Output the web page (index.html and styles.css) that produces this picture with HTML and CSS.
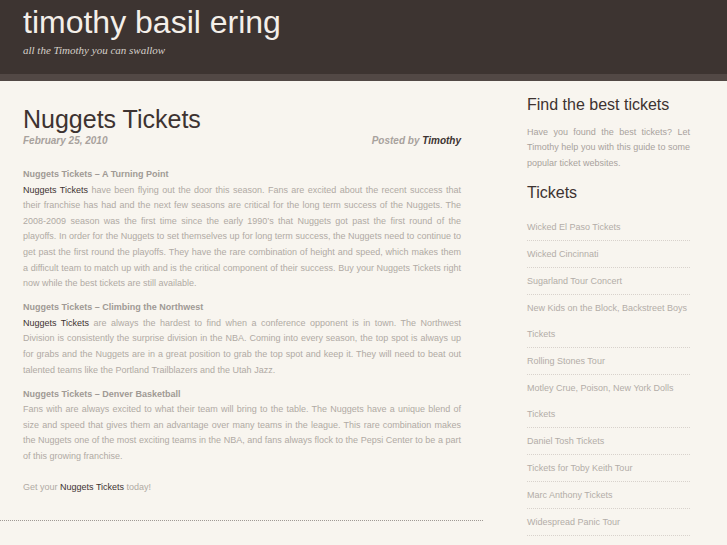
FILE: index.html
```html
<!DOCTYPE html>
<html>
<head>
<meta charset="utf-8">
<title>timothy basil ering</title>
<link rel="stylesheet" href="styles.css">
</head>
<body>
<header class="masthead">
  <h1 class="site-title">timothy basil ering</h1>
  <div class="tagline">all the Timothy you can swallow</div>
</header>
<div class="page">
  <main class="content">
    <h2 class="post-title">Nuggets Tickets</h2>
    <div class="post-meta">
      <span class="date">February 25, 2010</span>
      <span class="author">Posted by <b>Timothy</b></span>
    </div>
    <div class="entry">
      <p><strong>Nuggets Tickets – A Turning Point</strong><br><a href="#">Nuggets Tickets</a> have been flying out the door this season. Fans are excited about the recent success that their franchise has had and the next few seasons are critical for the long term success of the Nuggets. The 2008-2009 season was the first time since the early 1990’s that Nuggets got past the first round of the playoffs. In order for the Nuggets to set themselves up for long term success, the Nuggets need to continue to get past the first round the playoffs. They have the rare combination of height and speed, which makes them a&nbsp;difficult team to match up with and is the critical component of their success. Buy your Nuggets Tickets right now while the best tickets are still available.</p>
      <p><strong>Nuggets Tickets – Climbing the Northwest</strong><br><a href="#">Nuggets Tickets</a> are always the hardest to find when a conference opponent is in town. The Northwest Division is consistently the surprise division in the NBA. Coming into every season, the top spot is always up for grabs and the Nuggets are in a great position to grab the top spot and keep it. They will need to beat out talented teams like the Portland Trailblazers and the Utah Jazz.</p>
      <p><strong>Nuggets Tickets – Denver Basketball</strong><br>Fans with are always excited to what their team will bring to the table. The Nuggets have a unique blend of size and speed that gives them an advantage over many teams in the league. This rare combination makes the Nuggets one of the most exciting teams in the NBA, and fans always flock to the Pepsi Center to be a part of this growing franchise.</p>
      <p class="closing">Get your <a href="#">Nuggets Tickets</a> today!</p>
    </div>
  </main>
  <aside class="sidebar">
    <h3 class="widget-title">Find the best tickets</h3>
    <p class="widget-text">Have you found the best tickets? Let Timothy help you with this guide to some popular ticket websites.</p>
    <h3 class="widget-title tickets-title">Tickets</h3>
    <ul class="links">
      <li><a href="#">Wicked El Paso Tickets</a></li>
      <li><a href="#">Wicked Cincinnati</a></li>
      <li><a href="#">Sugarland Tour Concert</a></li>
      <li><a href="#">New Kids on the Block, Backstreet Boys Tickets</a></li>
      <li><a href="#">Rolling Stones Tour</a></li>
      <li><a href="#">Motley Crue, Poison, New York Dolls Tickets</a></li>
      <li><a href="#">Daniel Tosh Tickets</a></li>
      <li><a href="#">Tickets for Toby Keith Tour</a></li>
      <li><a href="#">Marc Anthony Tickets</a></li>
      <li><a href="#">Widespread Panic Tour</a></li>
      <li><a href="#">Def Leppard, Heart Tickets</a></li>
    </ul>
  </aside>
</div>
</body>
</html>
```
FILE: styles.css
```css
html, body {
  margin: 0;
  padding: 0;
}
body {
  background: #f8f5ef;
  font-family: "Liberation Sans", Arial, sans-serif;
  color: #b0aaa4;
  overflow: hidden;
}
a {
  color: #3d3331;
  text-decoration: none;
}
.masthead {
  background: #3d3431;
  height: 70px;
  padding: 4px 0 0 23px;
  border-bottom: 7px solid #524845;
}
.site-title {
  margin: 0;
  font-size: 32px;
  line-height: 36px;
  font-weight: normal;
  color: #f4efe9;
}
.tagline {
  margin-top: 3px;
  font-family: "Liberation Serif", "Times New Roman", serif;
  font-style: italic;
  font-size: 11px;
  line-height: 14px;
  color: #d6d0ca;
}
.page {
  display: flex;
  align-items: flex-start;
}
.content {
  width: 483px;
  flex: none;
  box-sizing: border-box;
  padding: 23px 22px 25px 23px;
  border-bottom: 1px dotted #9f9994;
}
.post-title {
  margin: 0;
  font-size: 25px;
  line-height: 30px;
  font-weight: normal;
  color: #3d3331;
}
.post-meta {
  display: flex;
  justify-content: space-between;
  font-size: 10px;
  line-height: 14px;
  font-weight: bold;
  font-style: italic;
  color: #a8a29d;
}
.post-meta b {
  color: #3d3331;
}
.entry {
  margin-top: 19px;
  font-size: 9px;
  line-height: 15.6px;
  text-align: justify;
}
.entry p {
  margin: 0 0 8.4px;
}
.entry strong {
  color: #a09a95;
}
.entry p.closing {
  margin: 15.4px 0 0;
}
.sidebar {
  width: 163px;
  flex: none;
  margin-left: 44px;
  padding-top: 14px;
}
.widget-title {
  margin: 0;
  font-size: 16px;
  line-height: 20px;
  font-weight: normal;
  color: #3d3331;
}
.widget-text {
  margin: 9.5px 0 0;
  font-size: 9px;
  line-height: 15.5px;
  text-align: justify;
  color: #a8a29d;
}
.tickets-title {
  margin-top: 12px;
}
.links {
  list-style: none;
  margin: 11px 0 0;
  padding: 0;
}
.links li {
  font-size: 9px;
  line-height: 26px;
  border-bottom: 1px dotted #d8d2cc;
}
.links a {
  color: #b3ada8;
}
```
